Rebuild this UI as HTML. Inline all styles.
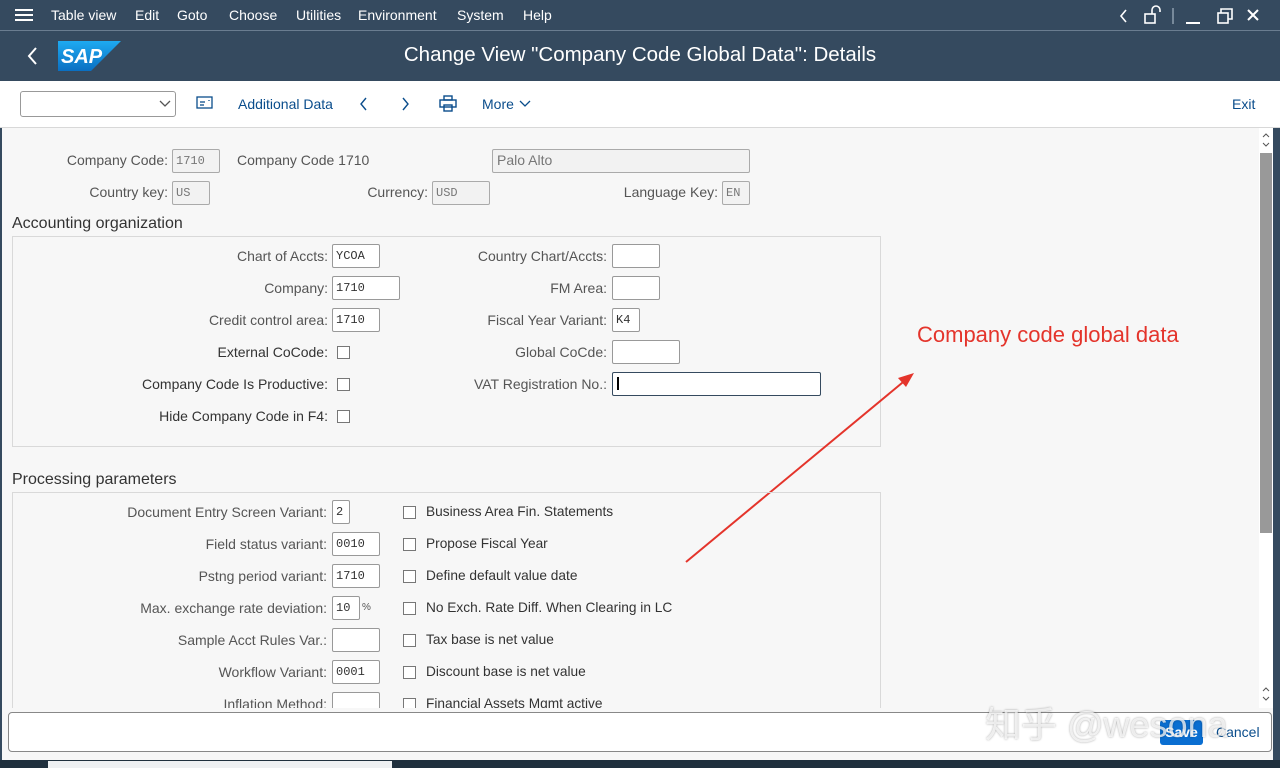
<!DOCTYPE html>
<html><head><meta charset="utf-8"><style>
*{margin:0;padding:0;box-sizing:border-box}
body{width:1280px;height:768px;overflow:hidden;background:#f7f7f7;font-family:"Liberation Sans",sans-serif;position:relative;color:#555}
.a{position:absolute;white-space:nowrap}
.menu{left:0;top:0;width:1280px;height:31px;background:#354a5f;border-bottom:1px solid #6a7d90}
.mi{color:#fff;font-size:14px;top:7px}
.title{left:0;top:31px;width:1280px;height:50px;background:#354a5f}
.tb{left:0;top:81px;width:1280px;height:47px;background:#fff;border-bottom:1px solid #d8d8d8}
.lbl{font-size:14px;color:#555;text-align:right}
.inp{height:24px;border:1px solid #999;border-radius:2px;background:#fff;font-family:"Liberation Mono",monospace;font-size:12px;color:#333;padding:4px 3px;line-height:14px}
.ro{background:#f2f2f2;border-color:#aaa;color:#777}
.cb{width:13px;height:13px;border:1px solid #777;background:#fff}
.txt{font-size:13.7px;color:#333}
.h{font-size:16px;color:#333}
.box{border:1px solid #d9d9d9}
</style></head><body>
<div class="a menu"></div>
<div class="a" style="left:15px;top:9px;width:18px;height:2px;background:#fff;box-shadow:0 5px 0 #fff,0 10px 0 #fff"></div>
<div class="a mi" style="left:51px">Table view</div>
<div class="a mi" style="left:135px">Edit</div>
<div class="a mi" style="left:177px">Goto</div>
<div class="a mi" style="left:229px">Choose</div>
<div class="a mi" style="left:296px">Utilities</div>
<div class="a mi" style="left:358px">Environment</div>
<div class="a mi" style="left:457px">System</div>
<div class="a mi" style="left:523px">Help</div>
<svg class="a" style="left:1110px;top:4px" width="170" height="24" fill="none" stroke="#fff" stroke-width="1.6">
<path d="M16 6 L11 12 L16 18"/>
<rect x="35" y="10" width="10" height="9"/><path d="M42 10 V6 a4 4 0 0 1 8 0 V8"/>
<line x1="63" y1="4" x2="63" y2="20" stroke="#8899aa"/>
<line x1="76" y1="19" x2="90" y2="19" stroke-width="2"/>
<rect x="108" y="9" width="10" height="10"/><path d="M111 9 V5 H122 V15 H118"/>
<path d="M138 6 L148 16 M148 6 L138 16" stroke-width="2"/>
</svg>
<div class="a title"></div>
<svg class="a" style="left:24px;top:45px" width="16" height="22" fill="none" stroke="#fff" stroke-width="2"><path d="M12 3 L5 11 L12 19"/></svg>
<svg class="a" style="left:58px;top:41px" width="63" height="30"><defs><linearGradient id="g" x1="0" y1="0" x2="0" y2="1"><stop offset="0" stop-color="#1eaaf1"/><stop offset="1" stop-color="#0a6fc2"/></linearGradient></defs><path d="M0 0 H63 L33 30 H0 Z" fill="url(#g)"/><text x="3" y="22" font-family="Liberation Sans" font-weight="bold" font-size="20" fill="#fff" font-style="italic">SAP</text></svg>
<div class="a" style="left:0;width:1280px;top:43px;text-align:center;color:#fff;font-size:20.5px;">Change View "Company Code Global Data": Details</div>
<div class="a tb"></div>
<div class="a" style="left:20px;top:91px;width:156px;height:26px;border:1px solid #999;border-radius:3px;background:#fff"></div>
<svg class="a" style="left:158px;top:98px" width="14" height="12" fill="none" stroke="#555" stroke-width="1.3"><path d="M2 3 L7 8 L12 3"/></svg>
<svg class="a" style="left:196px;top:96px" width="18" height="14" fill="none" stroke="#0a4d8c" stroke-width="1.3"><rect x="1" y="1" width="15" height="11"/><line x1="4" y1="6" x2="9" y2="6"/><line x1="4" y1="9" x2="8" y2="9"/><line x1="13" y1="4" x2="13" y2="5"/></svg>
<div class="a" style="left:238px;top:96px;font-size:14px;color:#0a4d8c">Additional Data</div>
<svg class="a" style="left:356px;top:95px" width="60" height="18" fill="none" stroke="#0a4d8c" stroke-width="1.4"><path d="M10 3 L5 9 L10 15"/><path d="M47 3 L52 9 L47 15"/></svg>
<svg class="a" style="left:439px;top:95px" width="18" height="18" fill="none" stroke="#0a4d8c" stroke-width="1.4"><rect x="5" y="1" width="8" height="4"/><rect x="1" y="5" width="16" height="7"/><rect x="5" y="10" width="8" height="6"/></svg>
<div class="a" style="left:482px;top:96px;font-size:14px;color:#0a4d8c">More</div>
<svg class="a" style="left:518px;top:99px" width="14" height="10" fill="none" stroke="#0a4d8c" stroke-width="1.3"><path d="M2 2 L7 7 L12 2"/></svg>
<div class="a" style="left:1232px;top:96px;font-size:14px;color:#0a4d8c">Exit</div>
<div class="a" style="left:1259px;top:128px;width:14px;height:580px;background:#fff"></div>
<div class="a" style="left:1260px;top:153px;width:12px;height:380px;background:#999"></div>
<svg class="a" style="left:1260px;top:130px" width="12" height="20" fill="none" stroke="#555" stroke-width="1"><path d="M3 7 L6 4 L9 7 M3 13 L6 16 L9 13"/></svg>
<svg class="a" style="left:1260px;top:684px" width="12" height="20" fill="none" stroke="#555" stroke-width="1"><path d="M3 7 L6 4 L9 7 M3 13 L6 16 L9 13"/></svg>
<div class="a" style="left:1273px;top:128px;width:7px;height:632px;background:#354a5f"></div>
<div class="a" style="left:0;top:128px;width:2px;height:632px;background:#354a5f"></div>

<div class="a lbl" style="right:1112px;top:152px">Company Code:</div>
<div class="a inp ro" style="left:172px;top:149px;width:48px">1710</div>
<div class="a txt" style="left:237px;top:152px;color:#555;font-size:14px">Company Code 1710</div>
<div class="a inp ro" style="left:492px;top:149px;width:258px;font-family:'Liberation Sans';font-size:14px;padding:3px 4px">Palo Alto</div>
<div class="a lbl" style="right:1112px;top:184px">Country key:</div>
<div class="a inp ro" style="left:172px;top:181px;width:38px">US</div>
<div class="a lbl" style="right:852px;top:184px">Currency:</div>
<div class="a inp ro" style="left:432px;top:181px;width:58px">USD</div>
<div class="a lbl" style="right:562px;top:184px">Language Key:</div>
<div class="a inp ro" style="left:722px;top:181px;width:28px">EN</div>

<div class="a h" style="left:12px;top:215px">Accounting organization</div>
<div class="a box" style="left:12px;top:236px;width:869px;height:211px"></div>
<div class="a lbl" style="right:952px;top:248px">Chart of Accts:</div><div class="a inp" style="left:332px;top:244px;width:48px">YCOA</div>
<div class="a lbl" style="right:952px;top:280px">Company:</div><div class="a inp" style="left:332px;top:276px;width:68px">1710</div>
<div class="a lbl" style="right:952px;top:312px">Credit control area:</div><div class="a inp" style="left:332px;top:308px;width:48px">1710</div>
<div class="a lbl" style="right:952px;top:344px;color:#333">External CoCode:</div><div class="a cb" style="left:337px;top:346px"></div>
<div class="a lbl" style="right:952px;top:376px;color:#333">Company Code Is Productive:</div><div class="a cb" style="left:337px;top:378px"></div>
<div class="a lbl" style="right:952px;top:408px;color:#333">Hide Company Code in F4:</div><div class="a cb" style="left:337px;top:410px"></div>
<div class="a lbl" style="right:673px;top:248px">Country Chart/Accts:</div><div class="a inp" style="left:612px;top:244px;width:48px"></div>
<div class="a lbl" style="right:673px;top:280px">FM Area:</div><div class="a inp" style="left:612px;top:276px;width:48px"></div>
<div class="a lbl" style="right:673px;top:312px">Fiscal Year Variant:</div><div class="a inp" style="left:612px;top:308px;width:28px">K4</div>
<div class="a lbl" style="right:673px;top:344px">Global CoCde:</div><div class="a inp" style="left:612px;top:340px;width:68px"></div>
<div class="a lbl" style="right:673px;top:376px">VAT Registration No.:</div>
<div class="a inp" style="left:612px;top:372px;width:209px;border:1px solid #354a5f"></div>
<div class="a" style="left:617px;top:377px;width:2px;height:13px;background:#000"></div>

<div class="a" style="left:917px;top:322px;font-size:22px;color:#e4342b">Company code global data</div>
<svg class="a" style="left:680px;top:368px" width="240" height="200"><line x1="6" y1="194" x2="228" y2="10" stroke="#e4342b" stroke-width="2"/><path d="M234 5 L218 10 L226 19 Z" fill="#e4342b"/></svg>

<div class="a h" style="left:12px;top:471px">Processing parameters</div>
<div class="a box" style="left:12px;top:492px;width:869px;height:230px"></div>
<div class="a lbl" style="right:953px;top:504px">Document Entry Screen Variant:</div><div class="a inp" style="left:332px;top:500px;width:18px">2</div>
<div class="a lbl" style="right:953px;top:536px">Field status variant:</div><div class="a inp" style="left:332px;top:532px;width:48px">0010</div>
<div class="a lbl" style="right:953px;top:568px">Pstng period variant:</div><div class="a inp" style="left:332px;top:564px;width:48px">1710</div>
<div class="a lbl" style="right:953px;top:600px">Max. exchange rate deviation:</div><div class="a inp" style="left:332px;top:596px;width:28px">10</div><div class="a" style="left:362px;top:602px;font-size:10px">%</div>
<div class="a lbl" style="right:953px;top:632px">Sample Acct Rules Var.:</div><div class="a inp" style="left:332px;top:628px;width:48px"></div>
<div class="a lbl" style="right:953px;top:664px">Workflow Variant:</div><div class="a inp" style="left:332px;top:660px;width:48px">0001</div>
<div class="a lbl" style="right:953px;top:696px">Inflation Method:</div><div class="a inp" style="left:332px;top:692px;width:48px"></div>
<div class="a cb" style="left:403px;top:506px"></div><div class="a txt" style="left:426px;top:504px">Business Area Fin. Statements</div>
<div class="a cb" style="left:403px;top:538px"></div><div class="a txt" style="left:426px;top:536px">Propose Fiscal Year</div>
<div class="a cb" style="left:403px;top:570px"></div><div class="a txt" style="left:426px;top:568px">Define default value date</div>
<div class="a cb" style="left:403px;top:602px"></div><div class="a txt" style="left:426px;top:600px">No Exch. Rate Diff. When Clearing in LC</div>
<div class="a cb" style="left:403px;top:634px"></div><div class="a txt" style="left:426px;top:632px">Tax base is net value</div>
<div class="a cb" style="left:403px;top:666px"></div><div class="a txt" style="left:426px;top:664px">Discount base is net value</div>
<div class="a cb" style="left:403px;top:698px"></div><div class="a txt" style="left:426px;top:696px">Financial Assets Mgmt active</div>

<div class="a" style="left:2px;top:708px;width:1271px;height:52px;background:#f7f7f7"></div>
<div class="a" style="left:8px;top:712px;width:1264px;height:40px;border:1px solid #888;border-radius:4px;background:#fff"></div>
<div class="a" style="left:1160px;top:720px;width:43px;height:25px;background:#0a6ed1;border-radius:3px;color:#fff;font-size:14px;font-weight:bold;text-align:center;line-height:25px">Save</div>
<div class="a" style="left:1216px;top:724px;font-size:14px;color:#0a4d8c">Cancel</div>
<div class="a" style="left:985px;top:696px;font-size:36px;color:rgba(255,255,255,0.75);font-family:'Liberation Sans','Noto Sans CJK SC',sans-serif;text-shadow:0 0 2px rgba(0,0,0,0.35)">知乎 @wesona</div>
<div class="a" style="left:0;top:760px;width:1280px;height:8px;background:#1f2f3d"></div>
<div class="a" style="left:48px;top:761px;width:344px;height:7px;background:#eef0f2"></div>
</body></html>
